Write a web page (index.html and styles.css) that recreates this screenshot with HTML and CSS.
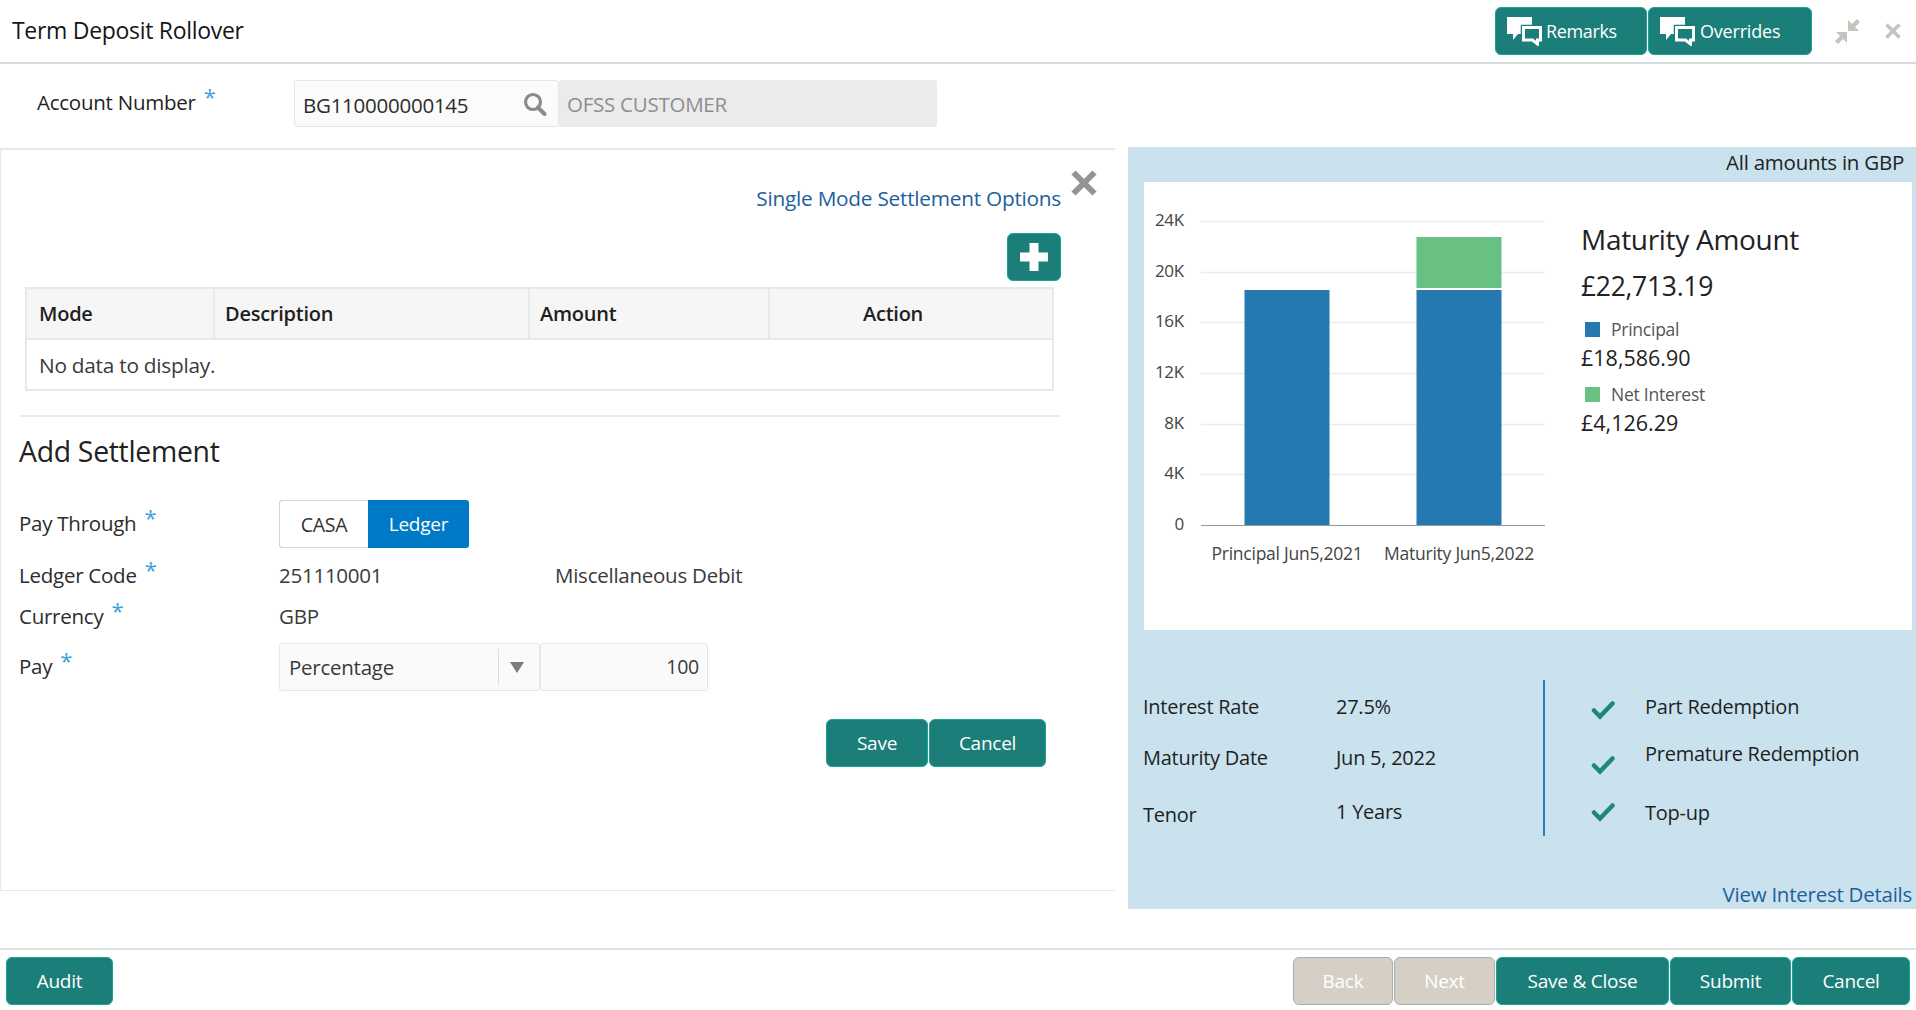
FILE: index.html
```html
<!DOCTYPE html>
<html lang="en">
<head>
<meta charset="utf-8">
<title>Term Deposit Rollover</title>
<link rel="stylesheet" href="styles.css">
</head>
<body>
<div class="page">
  <header class="topbar">
    <h1 class="title">Term Deposit Rollover</h1>
    <div class="top-actions">
      <button class="btn btn-remarks"><svg class="chat" viewBox="0 0 35 30"><path d="M0 1H25V18H11L6 24V18H0Z" fill="#fff"/><path class="bubble-gap" d="M16.500 11.500h17v12.500h-3v4l-5-4h-9z"/><path class="bubble" d="M16.500 11.500h17v12.500h-3v4l-5-4h-9z"/></svg>Remarks</button>
      <button class="btn btn-overrides"><svg class="chat" viewBox="0 0 35 30"><path d="M0 1H25V18H11L6 24V18H0Z" fill="#fff"/><path class="bubble-gap" d="M16.500 11.500h17v12.500h-3v4l-5-4h-9z"/><path class="bubble" d="M16.500 11.500h17v12.500h-3v4l-5-4h-9z"/></svg>Overrides</button>
      <svg class="win-icon compress" viewBox="0 0 25 25"><path d="M13 1V12H24L20 8L25 3L22 0L17 5ZM12 24V13H1L5 17L0 22L3 25L8 20Z" fill="#c8c3bc"/></svg>
      <svg class="win-icon closer" viewBox="0 0 16 16"><path d="M1.500 1.500l13 13M14.500 1.500l-13 13" stroke="#c8c3bc" stroke-width="3.600"/></svg>
    </div>
  </header>

  <div class="account-row">
    <label class="account-label">Account Number <span class="req">*</span></label>
    <div class="lookup">
      <span class="lookup-value">BG110000000145</span>
      <svg class="search" viewBox="0 0 24 24"><circle cx="10" cy="10" r="7.500" fill="none" stroke="#8a8a8a" stroke-width="3.200"/><path d="M15 15.500l6.500 6.500" stroke="#8a8a8a" stroke-width="4" stroke-linecap="round"/></svg>
    </div>
    <div class="customer">OFSS CUSTOMER</div>
  </div>

  <main class="content">
    <section class="left-panel">
      <div class="link-row">
        <a class="link link-options">Single Mode Settlement Options</a>
        <svg class="panel-close" viewBox="0 0 28 28"><path d="M3.500 3.500l21 21M24.500 3.500l-21 21" stroke="#949494" stroke-width="6"/></svg>
      </div>
      <div class="add-row">
        <button class="btn btn-add"><svg viewBox="0 0 28 28"><path d="M14 0v28M0 14h28" stroke="#fff" stroke-width="9"/></svg></button>
      </div>
      <table class="grid-table">
        <colgroup><col class="col-mode"><col class="col-desc"><col class="col-amount"><col class="col-action"></colgroup>
        <thead><tr><th>Mode</th><th>Description</th><th>Amount</th><th class="th-action">Action</th></tr></thead>
        <tbody><tr><td colspan="4">No data to display.</td></tr></tbody>
      </table>
      <div class="divider"></div>
      <h2 class="section-title">Add Settlement</h2>
      <div class="form">
        <div class="form-row row-through">
          <label class="form-label">Pay Through <span class="req">*</span></label>
          <div class="segment"><span class="seg seg-casa">CASA</span><span class="seg seg-ledger">Ledger</span></div>
        </div>
        <div class="form-row row-ledger">
          <label class="form-label">Ledger Code <span class="req">*</span></label>
          <span class="value value-code">251110001</span>
          <span class="value">Miscellaneous Debit</span>
        </div>
        <div class="form-row row-currency">
          <label class="form-label">Currency <span class="req">*</span></label>
          <span class="value">GBP</span>
        </div>
        <div class="form-row row-pay">
          <label class="form-label">Pay <span class="req">*</span></label>
          <div class="select"><span class="select-text">Percentage</span><span class="select-arrow"></span></div>
          <div class="number">100</div>
        </div>
      </div>
      <div class="form-actions">
        <button class="btn btn-save">Save</button>
        <button class="btn btn-form-cancel">Cancel</button>
      </div>
    </section>

    <aside class="right-panel">
      <div class="amounts-note">All amounts in GBP</div>
      <div class="card">
        <svg class="chart" viewBox="0 0 431 448">
          <g stroke="#e8ecef" stroke-width="1.500">
            <path d="M57 39.500h344M57 90.500h344M57 140.500h344M57 191.500h344M57 242.500h344M57 292.500h344"/>
          </g>
          <path d="M57 343.500h344" stroke="#9a9a9a" stroke-width="1"/>
          <rect x="100.500" y="108" width="85" height="235" fill="#247ab0"/>
          <rect x="272.500" y="108" width="85" height="235" fill="#247ab0"/>
          <rect x="272.500" y="55" width="85" height="51" fill="#69c083"/>
          <g class="axis-y">
            <text x="40" y="44">24K</text><text x="40" y="95">20K</text><text x="40" y="145">16K</text><text x="40" y="196">12K</text><text x="40" y="247">8K</text><text x="40" y="297">4K</text><text x="40" y="348">0</text>
          </g>
          <g class="axis-x">
            <text x="143" y="378">Principal Jun5,2021</text><text x="315" y="378">Maturity Jun5,2022</text>
          </g>
        </svg>
        <div class="summary">
          <div class="sum-title">Maturity Amount</div>
          <div class="sum-total">£22,713.19</div>
          <div class="legend legend-first"><span class="swatch swatch-blue"></span>Principal</div>
          <div class="sum-amount">£18,586.90</div>
          <div class="legend"><span class="swatch swatch-green"></span>Net Interest</div>
          <div class="sum-amount">£4,126.29</div>
        </div>
      </div>
      <div class="facts">
        <div class="fact-table">
          <span class="fact">Interest Rate</span><span class="fact">27.5%</span>
          <span class="fact">Maturity Date</span><span class="fact">Jun 5, 2022</span>
          <span class="fact fact-tenor">Tenor</span><span class="fact fact-years">1 Years</span>
        </div>
        <div class="feature-table">
          <svg class="check check-1" viewBox="0 0 24 20"><path d="M3 10.500l6 6L21.500 3.500" fill="none" stroke="#1f8580" stroke-width="4.500" stroke-linecap="round"/></svg><span class="fact feat-1">Part Redemption</span>
          <svg class="check check-2" viewBox="0 0 24 20"><path d="M3 10.500l6 6L21.500 3.500" fill="none" stroke="#1f8580" stroke-width="4.500" stroke-linecap="round"/></svg><span class="fact feat-2">Premature Redemption</span>
          <svg class="check check-3" viewBox="0 0 24 20"><path d="M3 10.500l6 6L21.500 3.500" fill="none" stroke="#1f8580" stroke-width="4.500" stroke-linecap="round"/></svg><span class="fact feat-3">Top-up</span>
        </div>
      </div>
      <div class="details-row"><a class="link">View Interest Details</a></div>
    </aside>
  </main>

  <footer class="footer">
    <button class="btn btn-audit">Audit</button>
    <div class="footer-actions">
      <button class="btn btn-disabled btn-back">Back</button>
      <button class="btn btn-disabled btn-next">Next</button>
      <button class="btn btn-saveclose">Save &amp; Close</button>
      <button class="btn btn-submit">Submit</button>
      <button class="btn btn-cancel">Cancel</button>
    </div>
  </footer>
</div>
</body>
</html>
```

FILE: styles.css
```css
* { box-sizing: border-box; }
html, body { margin: 0; padding: 0; background: #fff; }
body { font-family: "Open Sans", "Noto Sans", sans-serif; font-size: 20.500px; color: #2c2c2c; letter-spacing: -0.25px; }
.page { width: 1916px; height: 1010px; display: flex; flex-direction: column; overflow: hidden; }

/* buttons */
.btn { height: 48px; display: inline-flex; align-items: center; justify-content: center; background: #1b7e78; color: #fff; border: 1px solid #18a597; border-radius: 6px; font: inherit; font-size: 19px; letter-spacing: -0.25px; padding: 0; }
.btn-disabled { background: #d5cfc5; border-color: #a9adb0; }

/* header */
.topbar { height: 64px; flex: none; display: flex; justify-content: space-between; align-items: flex-start; border-bottom: 2px solid #d5dbdf; }
.title { margin: 13px 0 0 12px; font-size: 23px; font-weight: 400; line-height: 34px; color: #161616; letter-spacing: -0.3px; }
.top-actions { display: flex; align-items: center; margin-top: 7px; padding-right: 15px; }
.btn-remarks, .btn-overrides { justify-content: flex-start; padding-left: 11px; font-size: 18px; letter-spacing: -0.2px; }
.btn-remarks { width: 152px; margin-right: 1px; letter-spacing: -0.35px; }
.btn-overrides { width: 164px; }
.chat { width: 35px; height: 30px; margin-right: 5px; }
.btn-remarks .chat { margin-right: 4px; }
.bubble-gap { fill: none; stroke: #1b7e78; stroke-width: 5.500; }
.bubble { fill: #1b7e78; stroke: #fff; stroke-width: 3; }
.win-icon { display: block; }
.compress { width: 25px; height: 25px; margin-left: 23px; }
.closer { width: 16px; height: 16px; margin-left: 25px; }

/* account */
.account-row { height: 83px; flex: none; display: flex; align-items: flex-start; padding-top: 16px; }
.account-label { width: 294px; padding-left: 37px; line-height: 44px; color: #1f1f1f; }
.req { color: #3d9fdc; font-size: 22px; position: relative; top: -5px; margin-left: 3px; line-height: 0; }
.lookup { width: 265px; height: 47px; display: flex; align-items: center; justify-content: space-between; background: #fbfbfb; border: 1px solid #e6e6e6; border-radius: 3px; padding: 2px 11px 0 8px; }
.lookup-value { color: #2c2c2c; }
.search { width: 24px; height: 24px; margin-top: -2px; }
.customer { width: 378px; height: 47px; background: #ebebeb; border-radius: 3px; line-height: 49px; padding-left: 8px; color: #8e8e8e; }

/* layout */
.content { height: 762px; flex: none; display: flex; justify-content: space-between; align-items: flex-start; }
.left-panel { width: 1115px; height: 743px; margin-top: 1px; border-top: 2px solid #e6e8e9; border-left: 1px solid #e6e8e9; border-bottom: 1px solid #e6e8e9; }
.right-panel { width: 788px; height: 762px; background: #c9e2ee; display: flex; flex-direction: column; }

/* left panel */
.link-row { height: 83px; display: flex; justify-content: flex-end; align-items: flex-start; padding: 19px 17px 0 0; gap: 9px; }
.link { color: #20609b; line-height: 28px; }
.link-options { margin-top: 15px; font-size: 20.800px; }
.panel-close { width: 28px; height: 28px; }
.add-row { height: 48px; display: flex; justify-content: flex-end; padding-right: 54px; }
.btn-add { width: 54px; height: 48px; }
.btn-add svg { width: 28px; height: 28px; }
.grid-table { width: 1029px; margin: 6px 0 0 24px; border-collapse: collapse; table-layout: fixed; border: 2px solid #e7e9ea; }
.col-mode { width: 188px; }
.col-desc { width: 315px; }
.col-amount { width: 240px; }
.grid-table th { height: 51px; background: #f6f6f6; text-align: left; font-weight: 600; font-size: 20px; padding: 0 0 0 10px; color: #1f1f1f; border-right: 2px solid #e7e9ea; border-bottom: 2px solid #e7e9ea; }
.grid-table th:first-child { padding-left: 12px; }
.grid-table th.th-action { padding-left: 93px; border-right: 0; }
.grid-table td { height: 51px; padding: 0 0 0 12px; color: #3a3a3a; font-size: 20.800px; }
.divider { height: 2px; background: #ececec; margin: 24px 54px 0 18px; }
.section-title { margin: 15px 0 0 18px; height: 38px; font-size: 28.400px; line-height: 38px; font-weight: 400; color: #222; letter-spacing: -0.3px; }
.form { margin: 30px 0 0 18px; }
.form-row { display: flex; align-items: center; }
.form-label { width: 260px; color: #2c2c2c; flex: none; }
.row-through .form-label, .row-pay .form-label { margin-bottom: 3px; }
.row-through { height: 48px; }
.row-ledger { height: 34px; margin-top: 10px; }
.row-currency { height: 34px; margin-top: 7px; }
.row-pay { height: 48px; margin-top: 10px; }
.segment { display: flex; height: 48px; font-size: 19.500px; }
.seg { display: flex; align-items: center; justify-content: center; }
.seg-casa { width: 89px; border: 1px solid #d4d4d4; border-right: 0; color: #333; border-radius: 3px 0 0 3px; }
.seg-ledger { width: 101px; background: #0079c6; color: #fff; border-radius: 0 3px 3px 0; font-size: 19px; }
.value { color: #3a3a3a; }
.value-code { width: 276px; }
.select { width: 261px; height: 48px; display: flex; align-items: center; background: #fafafa; border: 1px solid #e6e6e6; border-radius: 3px; padding-left: 9px; }
.select-text { width: 210px; height: 36px; line-height: 36px; border-right: 1px solid #dcdcdc; flex: none; color: #3a3a3a; }
.select-arrow { margin-left: 11px; width: 0; height: 0; border-left: 7px solid transparent; border-right: 7px solid transparent; border-top: 11px solid #7c7c7c; }
.number { width: 168px; height: 48px; background: #fafafa; border: 1px solid #e6e6e6; border-radius: 3px; line-height: 46px; text-align: right; padding-right: 8px; color: #3a3a3a; font-size: 19.500px; }
.form-actions { display: flex; justify-content: flex-end; gap: 1px; margin-top: 28px; padding-right: 69px; }
.btn-save { width: 102px; }
.btn-form-cancel { width: 117px; }

/* right panel */
.amounts-note { height: 35px; line-height: 31px; text-align: right; padding-right: 12px; color: #222; }
.card { height: 448px; margin: 0 4px 0 16px; background: #fff; display: flex; flex: none; }
.chart { width: 431px; height: 448px; flex: none; }
.axis-y text { font-size: 17px; text-anchor: end; fill: #444; }
.axis-x text { font-size: 17.500px; text-anchor: middle; fill: #444; }
.summary { margin-left: 6px; padding-top: 38px; }
.sum-title { font-size: 28px; line-height: 38px; color: #222; letter-spacing: -0.3px; }
.sum-total { font-size: 26.500px; line-height: 38px; margin-top: 9px; color: #222; letter-spacing: -0.3px; }
.legend { display: flex; align-items: center; height: 30px; font-size: 17.500px; color: #555; margin-top: 7px; padding-left: 4px; }
.legend-first { margin-top: 9px; }
.swatch { width: 15px; height: 15px; margin-right: 11px; flex: none; }
.swatch-blue { background: #247ab0; }
.swatch-green { background: #69c083; }
.sum-amount { line-height: 28px; color: #222; font-size: 21.500px; letter-spacing: 0; }
.facts { display: flex; height: 156px; margin-top: 50px; flex: none; }
.fact-table { width: 402px; margin-left: 15px; display: grid; grid-template-columns: 193px 1fr; grid-template-rows: 54px 48px 54px; align-items: center; border-right: 2px solid #2b7cb3; }
.fact { color: #1f1f1f; line-height: 28px; font-size: 20px; }
.fact-tenor { margin-top: 12px; }
.fact-years { margin-top: 6px; }
.feature-table { margin-left: 46px; display: grid; grid-template-columns: 54px 1fr; grid-template-rows: 54px 48px 54px; align-items: center; }
.check { width: 24px; height: 20px; }
.check-1 { margin-top: 6px; }
.check-2 { margin-top: 14px; }
.check-3 { margin-top: 6px; }
.feat-2 { margin-bottom: 8px; }
.feat-3 { margin-top: 8px; }
.details-row { display: flex; justify-content: flex-end; padding-right: 4px; margin-top: 44px; }

/* footer */
.footer { height: 62px; flex: none; margin-top: 39px; border-top: 2px solid #dde1e4; display: flex; justify-content: space-between; padding: 7px 6px 0 6px; }
.btn-audit { width: 107px; }
.footer-actions { display: flex; gap: 1px; }
.btn-back { width: 100px; }
.btn-next { width: 101px; }
.btn-saveclose { width: 173px; }
.btn-submit { width: 121px; }
.btn-cancel { width: 118px; }
```
